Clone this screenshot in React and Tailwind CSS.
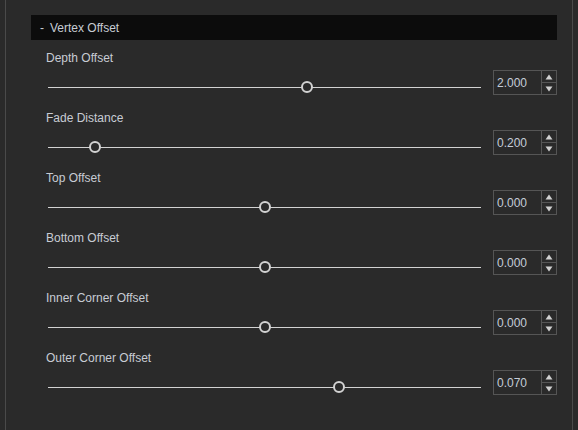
import React from "react";

const rows = [
  { label: "Depth Offset", value: "2.000", pos: 259 },
  { label: "Fade Distance", value: "0.200", pos: 47 },
  { label: "Top Offset", value: "0.000", pos: 217 },
  { label: "Bottom Offset", value: "0.000", pos: 217 },
  { label: "Inner Corner Offset", value: "0.000", pos: 217 },
  { label: "Outer Corner Offset", value: "0.070", pos: 291 },
];

const Slider = ({ pos }) => (
  <div className="relative w-[433px] h-[25px] ml-[2px]">
    <div className="absolute left-0 right-0 top-[17px] h-px bg-[#d2d2d2]" />
    <div
      className="absolute top-[11px] w-[12px] h-[12px] rounded-full border-2 border-[#d2d2d2] bg-[#2a2a2a]"
      style={{ left: pos - 6 }}
    />
  </div>
);

const SpinBox = ({ value }) => (
  <div className="flex w-[64px] h-[25px] border border-[#555555] ml-[12px]">
    <div className="flex-1 flex items-center pl-[3px] text-[12px] text-[#c5cdd8]">{value}</div>
    <div className="w-[15px] flex flex-col border-l border-[#555555]">
      <div className="flex-1 flex items-center justify-center border-b border-[#555555]">
        <svg width="8" height="6" viewBox="0 0 8 6">
          <path d="M4 0.5 L7.5 5.5 L0.5 5.5 Z" fill="#cfcfcf" />
        </svg>
      </div>
      <div className="flex-1 flex items-center justify-center">
        <svg width="8" height="6" viewBox="0 0 8 6">
          <path d="M0.5 0.5 L7.5 0.5 L4 5.5 Z" fill="#cfcfcf" />
        </svg>
      </div>
    </div>
  </div>
);

export default function App() {
  return (
    <div
      className="w-[578px] h-[430px] bg-[#2a2a2a] px-[5px] overflow-hidden"
      style={{ fontFamily: '"Liberation Sans", Arial, sans-serif' }}
    >
      <div className="h-full border-x border-[#4a4a4a] pl-[25px] pr-[15px] pt-[15px]">
        <div className="h-[25px] bg-[#0c0c0c] flex items-center pl-[9px] text-[12px] text-[#c8ccd4]">
          <span className="mr-[6px]">-</span>
          <span>Vertex Offset</span>
        </div>
        <div className="flex flex-col gap-[16px] pt-[11px] pl-[15px]">
          {rows.map((r) => (
            <div key={r.label} className="flex flex-col gap-[5px]">
              <div className="text-[12px] leading-[14px] text-[#c8ccd4]">{r.label}</div>
              <div className="flex items-start">
                <Slider pos={r.pos} />
                <SpinBox value={r.value} />
              </div>
            </div>
          ))}
        </div>
      </div>
    </div>
  );
}
